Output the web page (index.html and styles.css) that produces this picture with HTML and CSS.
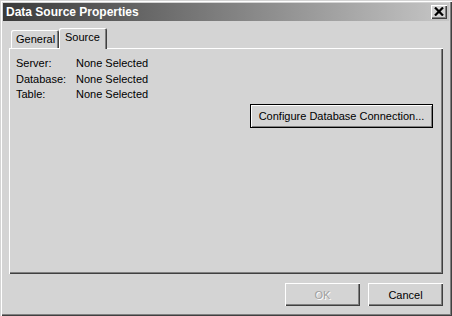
FILE: index.html
```html
<!DOCTYPE html>
<html>
<head>
<meta charset="utf-8">
<link rel="stylesheet" href="styles.css">
</head>
<body>
<div class="window">
  <div class="titlebar">
    <span class="title">Data Source Properties</span>
    <button class="close" aria-label="Close">
      <svg width="10" height="9" viewBox="0 0 10 9"><path d="M1 0.5 L9 8.5 M9 0.5 L1 8.5" stroke="#000" stroke-width="2.2" fill="none"/></svg>
    </button>
  </div>
  <div class="content">
    <div class="tabs">
      <div class="tab">General</div>
      <div class="tab active">Source</div>
    </div>
    <div class="panel">
      <div class="fields">
        <span>Server:</span><span>None Selected</span>
        <span>Database:</span><span>None Selected</span>
        <span>Table:</span><span>None Selected</span>
      </div>
      <div class="actions">
        <button class="btn default wide">Configure Database Connection...</button>
      </div>
    </div>
    <div class="footer">
      <button class="btn" disabled>OK</button>
      <button class="btn">Cancel</button>
    </div>
  </div>
</div>
</body>
</html>
```
FILE: styles.css
```css
html, body {
  margin: 0;
  padding: 0;
  background: #d4d4d4;
}
.window {
  width: 452px;
  height: 316px;
  box-sizing: border-box;
  padding: 3px;
  background: #d4d4d4;
  box-shadow: inset 1px 1px #d4d4d4, inset 2px 2px #ffffff, inset -1px -1px #404040, inset -2px -2px #808080;
  display: flex;
  flex-direction: column;
  font-family: "Liberation Sans", Arial, sans-serif;
  font-size: 11px;
  color: #000;
}
.titlebar {
  height: 18px;
  flex: none;
  display: flex;
  align-items: center;
  justify-content: space-between;
  padding: 0 2px 0 3px;
  background: linear-gradient(to right, #3a3a3a, #c6c6c6);
}
.title {
  color: #fff;
  font-weight: bold;
  font-size: 12px;
  line-height: 18px;
}
.close {
  width: 16px;
  height: 14px;
  padding: 0;
  border: none;
  margin: 0;
  background: #d4d4d4;
  box-shadow: inset 1px 1px #fff, inset -1px -1px #404040, inset -2px -2px #808080;
  display: flex;
  align-items: center;
  justify-content: center;
}
.close svg { display: block; margin: 0 1px 1px 0; }
.content {
  flex: 1;
  display: flex;
  flex-direction: column;
  padding: 7px 6px 7px 6px;
}
.tabs {
  display: flex;
  align-items: flex-end;
  padding-left: 2px;
  height: 20px;
}
.tab {
  width: 48px;
  height: 18px;
  box-sizing: border-box;
  padding: 3px 0 0 5px;
  line-height: 13px;
  background: #d4d4d4;
  box-shadow: inset 1px 1px #fff, inset -1px 0 #404040, inset -2px 0 #808080;
  border-radius: 2px 2px 0 0;
}
.tab.active {
  height: 21px;
  margin-bottom: -1px;
  padding: 3px 0 0 6px;
  position: relative;
  z-index: 1;
}
.panel {
  flex: 1;
  display: flex;
  flex-direction: column;
  padding: 8px 10px 0 7px;
  box-shadow: inset 1px 1px #fff, inset -1px -1px #404040, inset -2px -2px #808080;
}
.fields {
  display: grid;
  grid-template-columns: 60px auto;
  line-height: 15.5px;
}
.actions {
  display: flex;
  justify-content: flex-end;
  margin-top: 1px;
}
.btn {
  font-family: "Liberation Sans", Arial, sans-serif;
  font-size: 11px;
  color: #000;
  width: 75px;
  height: 23px;
  padding: 0;
  margin: 0;
  border: none;
  background: #d4d4d4;
  box-shadow: inset 1px 1px #fff, inset -1px -1px #404040, inset -2px -2px #808080;
}
.btn.wide {
  width: 183px;
  height: 24px;
}
.btn.default {
  box-shadow: inset 0 0 0 1px #000, inset 2px 2px #fff, inset -2px -2px #808080;
}
.btn:disabled {
  color: #a0a0a0;
  text-shadow: 1px 1px #fff;
}
.footer {
  display: flex;
  justify-content: flex-end;
  gap: 8px;
  margin-top: 9px;
}
```
